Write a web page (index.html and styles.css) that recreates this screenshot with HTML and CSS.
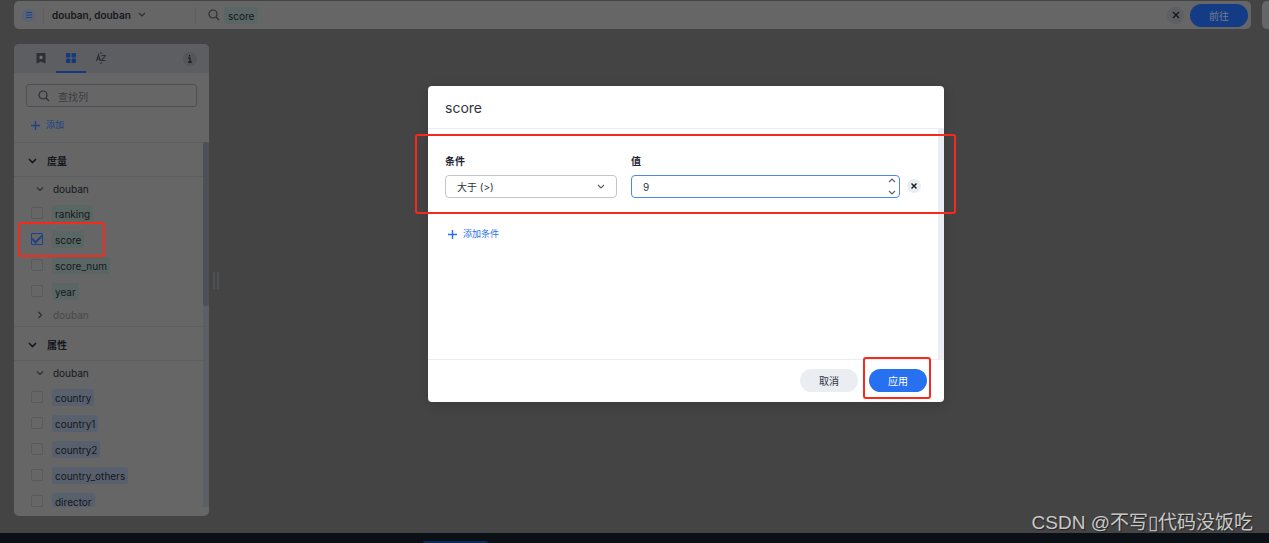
FILE: index.html
```html
<!DOCTYPE html>
<html lang="zh-CN">
<head>
<meta charset="utf-8">
<title>score</title>
<link rel="stylesheet" href="styles.css">
</head>
<body>
<div class="page">
  <header class="top">
    <div class="bar">
      <button class="source-icon" aria-label="数据源"><svg width="6" height="6" viewBox="0 0 6 6"><path d="M0 .5h6M0 3h6M0 5.5h6" stroke="#1d4287" stroke-width="1"/></svg></button>
      <button class="source">douban, douban <svg class="chev" width="8" height="6" viewBox="0 0 8 6"><path d="M1 1l3 3 3-3"/></svg></button>
      <div class="query">
        <svg class="lens" width="12" height="12" viewBox="0 0 12 12"><circle cx="5" cy="5" r="4"/><path d="M8 8l3 3"/></svg>
        <span class="tag measure">score</span>
      </div>
      <button class="round clear" aria-label="清除"><svg width="8" height="8" viewBox="0 0 8 8"><path d="M1 1l6 6M7 1L1 7"/></svg></button>
      <button class="pill go">前往</button>
    </div>
    <div class="bar-next"></div>
  </header>
  <main class="work">
    <aside class="side">
      <nav class="tabs">
        <button class="tab" aria-label="书签"><svg width="10" height="12" viewBox="0 0 10 12"><path d="M.5 1h9v10.500L5 9.500.5 11.500z" fill="#2c2f36"/><path d="M5 3l.7 1.500 1.600.2-1.200 1.100.3 1.600L5 6.600l-1.400.8.3-1.600-1.200-1.100 1.600-.2z" fill="#777a80"/></svg></button>
        <button class="tab active" aria-label="分组"><svg width="10" height="10" viewBox="0 0 10 10"><g fill="#15397f"><rect width="4.400" height="4.400" rx="1"/><rect x="5.600" width="4.400" height="4.400" rx="1"/><rect y="5.600" width="4.400" height="4.400" rx="1"/><rect x="5.600" y="5.600" width="4.400" height="4.400" rx="1"/></g></svg></button>
        <button class="tab" aria-label="按字母排序"><svg width="10" height="12" viewBox="0 0 10 12"><g stroke="#2c2f36"><path d="M.5 9l2-6 2 6M1.200 7.200h2.600M5.500 3.500h4l-4 5h4" stroke-width="1.200"/><path d="M3.800 1.500L5 .4l1.200 1.100M3.800 10.500L5 11.600l1.200-1.100"/></g></svg></button>
        <button class="round info" aria-label="信息"><svg width="6" height="8" viewBox="0 0 6 8"><path d="M1 3h2v4M1 7.200h4M2.500 0v1.400"/></svg></button>
      </nav>
      <label class="find">
        <svg class="lens" width="12" height="12" viewBox="0 0 12 12"><circle cx="5" cy="5" r="4"/><path d="M8 8l3 3"/></svg>
        <input type="text" placeholder="查找列" aria-label="查找列">
      </label>
      <button class="add"><svg width="9" height="9" viewBox="0 0 9 9"><path d="M4.500 0v9M0 4.500h9"/></svg>添加</button>
      <div class="scroller">
        <div class="list">
          <section>
            <h2 class="head"><svg class="chev bold" width="9" height="6" viewBox="0 0 9 6"><path d="M1 1l3.500 3.500L8 1"/></svg>度量</h2>
            <h3 class="group"><svg class="chev" width="8" height="6" viewBox="0 0 8 6"><path d="M1 1.500l3 3 3-3"/></svg>douban</h3>
            <label class="item"><input type="checkbox"><span class="tag measure">ranking</span></label>
            <label class="item"><input type="checkbox" checked><span class="tag measure">score</span></label>
            <label class="item"><input type="checkbox"><span class="tag measure">score_num</span></label>
            <label class="item"><input type="checkbox"><span class="tag measure">year</span></label>
            <h3 class="group faded"><svg class="chev" width="8" height="8" viewBox="0 0 8 8"><path d="M2.500 1l3 3-3 3"/></svg>douban</h3>
          </section>
          <section>
            <h2 class="head"><svg class="chev bold" width="9" height="6" viewBox="0 0 9 6"><path d="M1 1l3.500 3.500L8 1"/></svg>属性</h2>
            <h3 class="group"><svg class="chev" width="8" height="6" viewBox="0 0 8 6"><path d="M1 1.500l3 3 3-3"/></svg>douban</h3>
            <label class="item"><input type="checkbox"><span class="tag attribute">country</span></label>
            <label class="item"><input type="checkbox"><span class="tag attribute">country1</span></label>
            <label class="item"><input type="checkbox"><span class="tag attribute">country2</span></label>
            <label class="item"><input type="checkbox"><span class="tag attribute">country_others</span></label>
            <label class="item"><input type="checkbox"><span class="tag attribute">director</span></label>
          </section>
        </div>
        <div class="track"><div class="thumb"></div></div>
      </div>
    </aside>
    <div class="grip"></div>
  </main>
  <footer class="taskbar"><div class="task"></div></footer>
</div>

<div class="mark mark-column"></div>

<div class="overlay">
  <form class="modal" role="dialog" aria-labelledby="title">
    <h1 class="title" id="title">score</h1>
    <div class="body">
      <div class="content">
        <div class="fields">
          <div class="field condition">
            <label for="op">条件</label>
            <div class="control">
              <select id="op"><option>大于 (&gt;)</option></select>
              <svg class="chev" width="8" height="6" viewBox="0 0 8 6"><path d="M1 1l3 3 3-3"/></svg>
            </div>
          </div>
          <div class="field value">
            <label for="val">值</label>
            <div class="control focused">
              <input id="val" type="number" value="9">
              <div class="steps">
                <button type="button" aria-label="增加"><svg class="chev" width="8" height="5" viewBox="0 0 8 5"><path d="M1 4l3-3 3 3"/></svg></button>
                <button type="button" aria-label="减少"><svg class="chev" width="8" height="5" viewBox="0 0 8 5"><path d="M1 1l3 3 3-3"/></svg></button>
              </div>
            </div>
          </div>
          <button type="button" class="round remove" aria-label="删除"><svg width="6" height="6" viewBox="0 0 6 6"><path d="M.5.5l5 5M5.500.5l-5 5"/></svg></button>
        </div>
        <button type="button" class="add bright"><svg width="9" height="9" viewBox="0 0 9 9"><path d="M4.500 0v9M0 4.500h9"/></svg>添加条件</button>
      </div>
      <div class="rail"></div>
    </div>
    <div class="actions">
      <button type="button" class="pill cancel">取消</button>
      <button type="button" class="pill apply">应用</button>
    </div>
    <div class="mark mark-condition"></div>
    <div class="mark mark-apply"></div>
  </form>
</div>
<div class="watermark">CSDN @不写▯代码没饭吃</div>
</body>
</html>
```
FILE: styles.css
```css
* { box-sizing: border-box; }
body {
  margin: 0;
  background: #444;
  color: #14171d;
  font: 10px/16px Inter, "Noto Sans CJK SC", sans-serif;
}
button, input, select {
  margin: 0;
  padding: 0;
  border: 0;
  background: none;
  color: inherit;
  font: inherit;
  outline: 0;
}
button { display: flex; align-items: center; justify-content: center; }
h1, h2, h3 { margin: 0; font: inherit; }
svg { flex: none; fill: none; }
.page { display: flex; flex-direction: column; height: 100vh; overflow: hidden; }

.top { display: flex; gap: 11px; padding: 1px 0 0 14px; }
.bar {
  flex: 1;
  display: flex;
  align-items: center;
  height: 28px;
  padding: 0 3px 0 8px;
  border-radius: 5px;
  background: #666;
}
.bar-next { width: 7px; border-radius: 5px 0 0 5px; background: #666; }
.source-icon { width: 13px; height: 13px; border-radius: 50%; background: #596372; }
.source {
  justify-content: flex-start;
  width: 153px;
  height: 17px;
  margin-left: 8px;
  padding-left: 8px;
  gap: 7px;
  border: solid #5d5f62;
  border-width: 0 1px;
  font-weight: 600;
}
.chev { stroke: #2c2f36; stroke-width: 1.2; }
.chev.bold { stroke: #14171d; stroke-width: 1.6; }
.lens { stroke: #2c2f36; stroke-width: 1.2; }
.query { flex: 1; display: flex; align-items: center; gap: 4px; padding-left: 12px; }
.tag { height: 17px; padding: 0 3px; border-radius: 3px; line-height: 18px; }
.query .tag { padding: 0 4px; }
.measure { background: #5a6663; }
.attribute { background: #59606d; }
.round { border-radius: 50%; }
.clear { width: 17px; height: 17px; background: #5d5f62; }
.round svg { stroke: #14171d; stroke-width: 1.4; }
.pill { width: 58px; height: 23px; padding-top: 1px; border-radius: 12px; }
.go { margin-left: 6px; background: #143c86; color: #777d88; }

.work { flex: 1; display: flex; align-items: flex-start; padding: 15px 0 0 14px; }
.side {
  display: flex;
  flex-direction: column;
  width: 195px;
  padding-bottom: 9px;
  border-radius: 5px;
  background: #666;
  overflow: hidden;
}
.tabs { display: flex; align-items: center; height: 29px; padding: 0 12px; background: #5c5e61; }
.tab { width: 30px; height: 29px; border-bottom: 2px solid transparent; }
.active { border-color: #15397f; }
.info { width: 14px; height: 14px; margin-left: auto; background: #54565a; }
.info svg { stroke-width: 1.2; }
.find {
  display: flex;
  align-items: center;
  gap: 8px;
  height: 23px;
  margin: 11px 12px 0;
  padding: 0 11px;
  border: 1px solid #4d4f53;
  border-radius: 3px;
}
.find input { flex: 1; min-width: 0; padding-top: 2px; }
.find input::placeholder { color: #393b40; opacity: 1; }
.add { gap: 6px; color: #1b428c; font-size: 9px; }
.add svg { stroke: currentColor; stroke-width: 1.4; }
.side .add { align-self: flex-start; margin: 10px 0 9px 17px; }
.scroller { display: flex; height: 365px; }
.list { flex: 1; overflow: hidden; }
.head {
  display: flex;
  align-items: center;
  gap: 10px;
  height: 35px;
  padding: 2px 0 0 14px;
  border: solid #5c5e61;
  border-width: 1px 0;
  font-weight: 700;
}
.group { display: flex; align-items: center; gap: 9px; height: 23px; padding-left: 22px; }
.faded { height: 22px; color: #46484b; }
.item { display: flex; align-items: center; gap: 9px; height: 26px; padding-left: 17px; }
.item input {
  appearance: none;
  display: grid;
  place-items: center;
  width: 12px;
  height: 12px;
  border: 1px solid #5a5b5e;
  border-radius: 1px;
}
.item input:checked { border-color: #1b428c; }
.item input:checked::after {
  content: "";
  width: 8px;
  height: 4px;
  border: solid #1b428c;
  border-width: 0 0 2px 2px;
  transform: translateY(-1px) rotate(-45deg);
}
.track { width: 6px; background: #5c5f63; }
.thumb { height: 45%; border-radius: 3px; background: #4d5055; }
.grip { align-self: center; width: 6px; height: 17px; margin: 0 0 16px 4px; border: solid #4f5053; border-width: 0 2px; }
.taskbar { display: flex; height: 10px; background: #0b0f16; }
.task { align-self: flex-end; width: 65px; height: 2px; margin-left: 33.3%; border-radius: 3px 3px 0 0; background: #0c2c5c; }

.overlay {
  position: absolute;
  inset: 0;
  display: flex;
  justify-content: center;
  align-items: flex-start;
  padding: 86px 0 0 103px;
}
.modal {
  position: relative;
  width: 516px;
  border-radius: 4px;
  background: #fff;
  color: #30343d;
  box-shadow: 0 3px 12px rgba(0, 0, 0, .15);
}
.title { height: 43px; padding: 0 17px; border-bottom: 1px solid #eaedf2; font-size: 14px; line-height: 43px; }
.body { display: flex; height: 230px; }
.content { flex: 1; padding: 24px 17px; }
.rail { width: 6px; background: #eaedf2; }
.fields { display: flex; align-items: flex-end; }
.field { display: flex; flex-direction: column; gap: 6px; }
.field label { font-weight: 700; color: #1d232f; }
.condition { width: 172px; }
.value { width: 269px; margin: 0 7px 0 14px; }
.control {
  display: flex;
  align-items: center;
  height: 23px;
  padding: 0 11px;
  border: 1px solid #c0c6cf;
  border-radius: 4px;
}
.control select, .control input { flex: 1; min-width: 0; appearance: none; padding-top: 1px; }
.control .chev { stroke: #5a6170; }
.control input { appearance: textfield; }
.control input::-webkit-inner-spin-button { appearance: none; }
.focused { border-color: #4f86e8; padding-right: 3px; }
.steps { display: flex; flex-direction: column; gap: 7px; }
.remove { width: 14px; height: 14px; margin-bottom: 5px; background: #eaedf2; }
.bright { margin: 28px 0 0 3px; color: #2770ef; }
.actions {
  display: flex;
  justify-content: flex-end;
  gap: 11px;
  padding: 9px 17px 10px;
  border-top: 1px solid #eaedf2;
}
.cancel { background: #eaedf2; }
.apply { background: #2770ef; color: #fff; }

.mark { position: absolute; border: 2px solid #f52a1c; border-radius: 3px; pointer-events: none; }
.mark-column { left: 18px; top: 222px; width: 87px; height: 35px; }
.mark-condition { left: -13px; right: -12px; top: 48px; height: 80px; }
.mark-apply { right: 13px; bottom: 3px; width: 68px; height: 42px; }
.watermark {
  position: absolute;
  right: 16px;
  bottom: 6px;
  color: #c9c9c9;
  font: 19px/28px "Liberation Sans", "Noto Sans CJK SC", sans-serif;
  text-shadow: 1px 1px 1px #222;
}
```
